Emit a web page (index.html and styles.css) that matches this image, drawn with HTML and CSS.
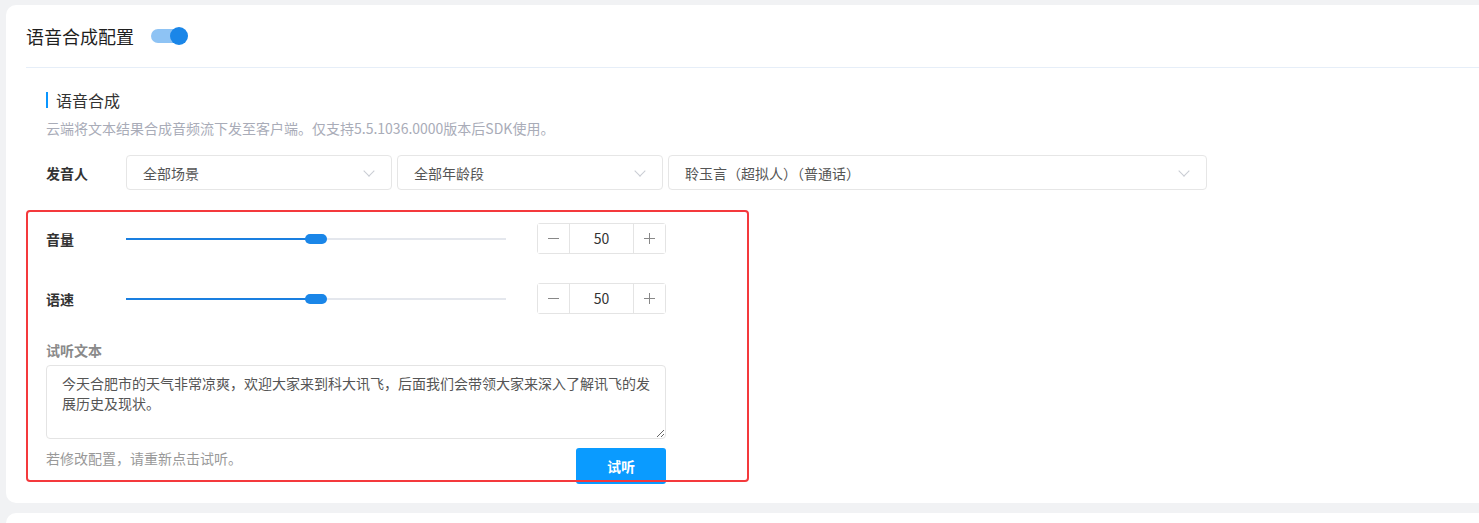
FILE: index.html
```html
<!DOCTYPE html>
<html lang="zh-CN">

<head>
    <meta charset="UTF-8">
    <title>语音合成配置</title>
    <link rel="stylesheet" href="styles.css">
</head>

<body>
    <section class="card">
        <header class="card-head">
            <h1>语音合成配置</h1>
            <span class="switch"><span class="knob"></span></span>
        </header>

        <div class="card-body">
            <h2 class="sec-title">语音合成</h2>
            <p class="sec-desc">云端将文本结果合成音频流下发至客户端。仅支持5.5.1036.0000版本后SDK使用。</p>

            <div class="row pick">
                <label class="lbl">发音人</label>
                <div class="select s1"><span>全部场景</span><i class="arrow"></i></div>
                <div class="select s2"><span>全部年龄段</span><i class="arrow"></i></div>
                <div class="select s3"><span>聆玉言（超拟人）（普通话）</span><i class="arrow"></i></div>
            </div>

            <div class="form-area">
                <div class="row slider-row">
                    <label class="lbl">音量</label>
                    <div class="slider"><div class="fill"></div><div class="thumb"></div></div>
                    <div class="num">
                        <button class="step"><svg width="11" height="11" viewBox="0 0 11 11"><line x1="0" y1="5.5" x2="11" y2="5.5" stroke="#888" stroke-width="1"/></svg></button>
                        <span class="val">50</span>
                        <button class="step"><svg width="11" height="11" viewBox="0 0 11 11"><line x1="0" y1="5.5" x2="11" y2="5.5" stroke="#888" stroke-width="1"/><line x1="5.5" y1="0" x2="5.5" y2="11" stroke="#888" stroke-width="1"/></svg></button>
                    </div>
                </div>
                <div class="row slider-row second">
                    <label class="lbl">语速</label>
                    <div class="slider"><div class="fill"></div><div class="thumb"></div></div>
                    <div class="num">
                        <button class="step"><svg width="11" height="11" viewBox="0 0 11 11"><line x1="0" y1="5.5" x2="11" y2="5.5" stroke="#888" stroke-width="1"/></svg></button>
                        <span class="val">50</span>
                        <button class="step"><svg width="11" height="11" viewBox="0 0 11 11"><line x1="0" y1="5.5" x2="11" y2="5.5" stroke="#888" stroke-width="1"/><line x1="5.5" y1="0" x2="5.5" y2="11" stroke="#888" stroke-width="1"/></svg></button>
                    </div>
                </div>

                <p class="sub-lbl">试听文本</p>
                <textarea class="txt">今天合肥市的天气非常凉爽，欢迎大家来到科大讯飞，后面我们会带领大家来深入了解讯飞的发展历史及现状。</textarea>

                <div class="foot">
                    <span class="hint">若修改配置，请重新点击试听。</span>
                    <button class="btn">试听</button>
                </div>

                <div class="mark"></div>
            </div>
        </div>
    </section>

    <section class="card next"></section>
</body>

</html>
```

FILE: styles.css
```css
* {
    box-sizing: border-box;
}

body {
    margin: 0;
    background-color: #f1f2f4;
    font-family: "Noto Sans CJK SC", "Noto Sans", sans-serif;
    font-size: 14px;
    color: #333;
    overflow: hidden;
}

.card {
    background-color: #fff;
    margin: 5px -30px 0 6px;
    border-radius: 10px;
    padding-bottom: 19px;
}

.card.next {
    margin-top: 10px;
    height: 30px;
}

.card-head {
    height: 63px;
    margin-left: 20px;
    border-bottom: 1px solid #e6eef8;
    display: flex;
    align-items: center;
}

.card-head h1 {
    margin: 0;
    font-size: 18px;
    font-weight: 400;
    color: #1f1f1f;
    line-height: 24px;
}

.switch {
    margin-left: 17px;
    width: 36px;
    height: 14px;
    border-radius: 7px;
    background-color: #8ec3f4;
    position: relative;
}

.switch .knob {
    position: absolute;
    right: -1px;
    top: -2px;
    width: 18px;
    height: 18px;
    border-radius: 50%;
    background-color: #1a86e8;
}

.card-body {
    padding-left: 40px;
}

.sec-title {
    margin: 24px 0 0;
    font-size: 16px;
    font-weight: 400;
    line-height: 16px;
    color: #333;
    border-left: 2px solid #0a96ff;
    padding-left: 8px;
}

.sec-desc {
    margin: 10px 0 0;
    font-size: 14px;
    line-height: 20px;
    color: #a9acb8;
}

.row {
    display: flex;
    align-items: center;
}

.lbl {
    width: 80px;
    font-weight: 700;
    color: #333;
    font-size: 14px;
}

.row.pick {
    margin-top: 17px;
}

.select {
    height: 35px;
    border: 1px solid #e6e6e6;
    border-radius: 4px;
    padding: 0 16px;
    display: flex;
    align-items: center;
    justify-content: space-between;
    color: #555;
}

.s1 {
    width: 266px;
}

.s2 {
    width: 266px;
    margin-left: 5px;
}

.s3 {
    width: 539px;
    margin-left: 5px;
}

.arrow {
    width: 8px;
    height: 8px;
    border-right: 1px solid #c9ccd3;
    border-bottom: 1px solid #c9ccd3;
    transform: rotate(45deg);
    margin: -4px 2px 0 0;
}

.form-area {
    position: relative;
    margin-top: 20px;
    padding-top: 13px;
    width: 620px;
}

.slider-row {
    height: 31px;
}

.slider-row.second {
    margin-top: 29px;
}

.slider {
    width: 380px;
    height: 2px;
    background-color: #e4e7ed;
    position: relative;
}

.slider .fill {
    width: 50%;
    height: 2px;
    background-color: #1a7fe0;
}

.slider .thumb {
    position: absolute;
    left: 179px;
    top: -4px;
    width: 22px;
    height: 10px;
    border-radius: 5px;
    background-color: #1a86e8;
}

.num {
    margin-left: 31px;
    width: 129px;
    height: 31px;
    border: 1px solid #e4e4e4;
    border-radius: 3px;
    display: flex;
}

.step {
    width: 31px;
    border: 0;
    background-color: #fff;
    padding: 0;
    display: flex;
    align-items: center;
    justify-content: center;
}

.val {
    flex: 1;
    text-align: center;
    line-height: 29px;
    border-left: 1px solid #e4e4e4;
    border-right: 1px solid #e4e4e4;
    color: #333;
}

.sub-lbl {
    margin: 26px 0 0;
    line-height: 20px;
    font-size: 14px;
    font-weight: 700;
    color: #8a8a8a;
}

.txt {
    display: block;
    margin-top: 5px;
    width: 620px;
    height: 74px;
    border: 1px solid #e4e4e4;
    border-radius: 4px;
    padding: 7px 15px;
    font-family: "Noto Sans CJK SC", "Noto Sans", sans-serif;
    font-size: 14px;
    line-height: 20px;
    color: #555;
    resize: vertical;
}

.foot {
    margin-top: 9px;
    display: flex;
    justify-content: space-between;
    align-items: flex-start;
}

.hint {
    line-height: 20px;
    font-size: 14px;
    color: #999;
}

.btn {
    width: 90px;
    height: 36px;
    border: 0;
    border-radius: 3px;
    background-color: #0a9bff;
    color: #fff;
    font-family: "Noto Sans CJK SC", sans-serif;
    font-size: 14px;
    font-weight: 700;
}

.mark {
    position: absolute;
    left: -20px;
    top: 0;
    width: 723px;
    height: 272px;
    border: 2px solid #f4393c;
    border-radius: 4px;
    pointer-events: none;
}
```
